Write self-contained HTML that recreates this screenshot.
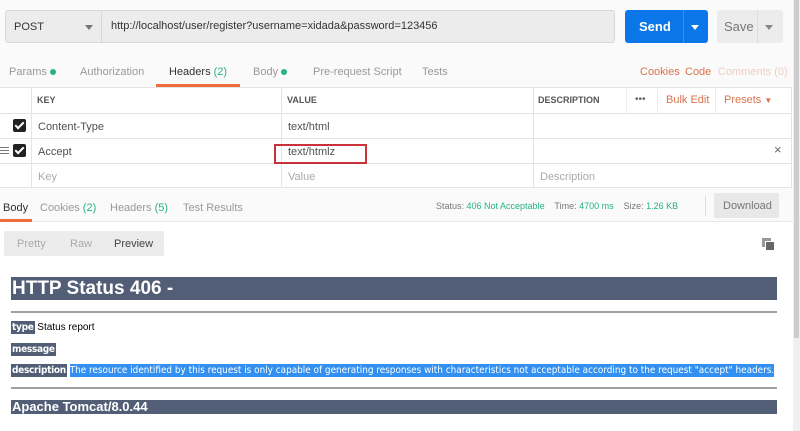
<!DOCTYPE html>
<html><head><style>
*{margin:0;padding:0;box-sizing:border-box}
body{width:800px;height:431px;overflow:hidden;background:#fff;font-family:"Liberation Sans",sans-serif;position:relative;color:#505050}
.a{position:absolute}
.t{font-size:11px;white-space:nowrap}
.hr{position:absolute;left:11px;width:766px;height:2px;background:#a0a0a0}
.bar{position:absolute;left:11px;width:766px;background:#525d76;color:#fff;font-weight:bold;font-family:"Liberation Sans",sans-serif}
.lbl{background:#525d76;color:#fff;font-weight:bold;font-family:"DejaVu Sans Condensed","DejaVu Sans",sans-serif;font-size:10px;padding:1px 1px;letter-spacing:-0.3px}
.cb{position:absolute;width:13px;height:13px;background:#222;border-radius:2px}
.cb:after{content:"";position:absolute;left:4px;top:1px;width:3px;height:7px;border:solid #fff;border-width:0 2px 2px 0;transform:rotate(45deg)}
</style></head><body>
<div class="a" style="left:0;top:0;width:793px;height:60px;background:#fafafa"></div>
<div class="a" style="left:5px;top:10px;width:610px;height:33px;background:#ececec;border:1px solid #d8d8d8;border-radius:3px"></div>
<div class="a" style="left:101px;top:10px;width:1px;height:33px;background:#d8d8d8"></div>
<div class="a t" style="left:14px;top:21px;color:#333">POST</div>
<div class="a" style="left:85px;top:25px;border:4px solid transparent;border-top:5px solid #777"></div>
<div class="a t" style="left:111px;top:20px;color:#333">http://localhost/user/register?username=xidada&amp;password=123456</div>
<div class="a" style="left:625px;top:10px;width:83px;height:33px;background:#0b76e8;border-radius:3px"></div>
<div class="a" style="left:683px;top:10px;width:1px;height:33px;background:#3a8ef0"></div>
<div class="a" style="left:639px;top:19px;color:#fff;font-weight:bold;font-size:13px">Send</div>
<div class="a" style="left:691px;top:25px;border:4px solid transparent;border-top:5px solid #fff"></div>
<div class="a" style="left:717px;top:10px;width:66px;height:33px;background:#ececec;border-radius:3px"></div>
<div class="a" style="left:757px;top:10px;width:1px;height:33px;background:#ddd"></div>
<div class="a" style="left:724px;top:19px;color:#777;font-size:13px">Save</div>
<div class="a" style="left:765px;top:25px;border:4px solid transparent;border-top:5px solid #888"></div>

<div class="a" style="left:0;top:60px;width:793px;height:27px;background:#fafafa"></div>
<div class="a t" style="left:9px;top:66px;color:#999">Params <span style="display:inline-block;width:6px;height:6px;border-radius:3px;background:#26b47f"></span></div>
<div class="a t" style="left:80px;top:66px;color:#999">Authorization</div>
<div class="a t" style="left:169px;top:66px;color:#333">Headers <span style="color:#26b47f">(2)</span></div>
<div class="a" style="left:156px;top:84px;width:84px;height:3px;background:#f26b3a"></div>
<div class="a t" style="left:253px;top:66px;color:#999">Body <span style="display:inline-block;width:6px;height:6px;border-radius:3px;background:#26b47f"></span></div>
<div class="a t" style="left:313px;top:66px;color:#999">Pre-request Script</div>
<div class="a t" style="left:422px;top:66px;color:#999">Tests</div>
<div class="a t" style="left:640px;top:66px;color:#d7734d">Cookies</div>
<div class="a t" style="left:685px;top:66px;color:#d7734d">Code</div>
<div class="a t" style="left:718px;top:66px;color:#f0cfc2">Comments (0)</div>

<div class="a" style="left:0;top:87px;width:792px;height:101px;border:1px solid #e4e4e4;border-left:none"></div>
<div class="a" style="left:0;top:113px;width:792px;height:1px;background:#e4e4e4"></div>
<div class="a" style="left:0;top:138px;width:792px;height:1px;background:#e4e4e4"></div>
<div class="a" style="left:0;top:163px;width:792px;height:1px;background:#e4e4e4"></div>
<div class="a" style="left:31px;top:87px;width:1px;height:101px;background:#e4e4e4"></div>
<div class="a" style="left:281px;top:87px;width:1px;height:101px;background:#e4e4e4"></div>
<div class="a" style="left:533px;top:87px;width:1px;height:101px;background:#e4e4e4"></div>
<div class="a" style="left:626px;top:88px;width:1px;height:25px;background:#eee"></div>
<div class="a" style="left:657px;top:88px;width:1px;height:25px;background:#eee"></div>
<div class="a" style="left:715px;top:88px;width:1px;height:25px;background:#eee"></div>
<div class="a" style="left:37px;top:95px;font-size:9px;font-weight:bold;color:#555">KEY</div>
<div class="a" style="left:287px;top:95px;font-size:9px;font-weight:bold;color:#555">VALUE</div>
<div class="a" style="left:538px;top:95px;font-size:9px;font-weight:bold;color:#555">DESCRIPTION</div>
<div class="a" style="left:635px;top:94px;font-size:10px;color:#666">•••</div>
<div class="a t" style="left:666px;top:94px;color:#d7734d">Bulk Edit</div>
<div class="a t" style="left:724px;top:94px;color:#d7734d">Presets <span style="font-size:8px">▼</span></div>
<div class="cb" style="left:13px;top:119px"></div>
<div class="cb" style="left:13px;top:144px"></div>
<div class="a" style="left:0;top:147px;width:9px;height:7px;border-top:1px solid #777;border-bottom:1px solid #777"></div>
<div class="a" style="left:0;top:150px;width:9px;height:1px;background:#777"></div>
<div class="a t" style="left:38px;top:121px">Content-Type</div>
<div class="a t" style="left:38px;top:146px">Accept</div>
<div class="a t" style="left:38px;top:171px;color:#aaa">Key</div>
<div class="a t" style="left:288px;top:121px">text/html</div>
<div class="a t" style="left:288px;top:146px">text/htmlz</div>
<div class="a t" style="left:288px;top:171px;color:#aaa">Value</div>
<div class="a t" style="left:540px;top:171px;color:#aaa">Description</div>
<div class="a" style="left:774px;top:142px;font-size:13px;color:#666">×</div>
<div class="a" style="left:274px;top:144px;width:93px;height:20px;border:2px solid #c8333a"></div>

<div class="a" style="left:0;top:188px;width:793px;height:34px;background:#fafafa;border-bottom:1px solid #e8e8e8"></div>
<div class="a t" style="left:3px;top:202px;color:#333">Body</div>
<div class="a" style="left:0;top:219px;width:32px;height:3px;background:#f26b3a"></div>
<div class="a t" style="left:40px;top:202px;color:#999">Cookies <span style="color:#26b47f">(2)</span></div>
<div class="a t" style="left:110px;top:202px;color:#999">Headers <span style="color:#26b47f">(5)</span></div>
<div class="a t" style="left:183px;top:202px;color:#999">Test Results</div>
<div class="a" style="left:436px;top:201px;font-size:9px;color:#777;white-space:nowrap">Status: <span style="color:#26b47f">406 Not Acceptable</span>&nbsp;&nbsp;&nbsp; Time: <span style="color:#26b47f">4700 ms</span>&nbsp;&nbsp;&nbsp; Size: <span style="color:#26b47f">1.26 KB</span></div>
<div class="a" style="left:705px;top:196px;width:1px;height:20px;background:#ddd"></div>
<div class="a" style="left:714px;top:193px;width:65px;height:25px;background:#e8e8e8;border-radius:2px"></div>
<div class="a t" style="left:723px;top:200px;color:#777">Download</div>

<div class="a" style="left:4px;top:231px;width:160px;height:25px;background:#ececec;border-radius:2px"></div>
<div class="a t" style="left:17px;top:238px;color:#aaa">Pretty</div>
<div class="a t" style="left:70px;top:238px;color:#aaa">Raw</div>
<div class="a t" style="left:114px;top:238px;color:#444">Preview</div>
<div class="a" style="left:762px;top:238px;width:9px;height:9px;background:#999"></div>
<div class="a" style="left:765px;top:241px;width:10px;height:10px;background:#666;border:1px solid #fff"></div>

<div class="bar" style="top:277px;height:23px;font-size:19px;line-height:23px;padding-left:1px">HTTP Status 406 -</div>
<div class="hr" style="top:311px"></div>
<div class="a" style="left:11px;top:322px;font-size:10px;color:#000;white-space:nowrap"><span class="lbl">type</span> Status report</div>
<div class="a" style="left:11px;top:344px;font-size:10px"><span class="lbl">message</span></div>
<div class="a" style="left:11px;top:365px;font-size:10px;white-space:nowrap"><span class="lbl">description</span> <span style="background:#3390f0;color:#fff;font-family:'DejaVu Sans Condensed','DejaVu Sans',sans-serif;font-size:9.9px;padding:1px 0">The resource identified by this request is only capable of generating responses with characteristics not acceptable according to the request "accept" headers.</span></div>
<div class="hr" style="top:387px"></div>
<div class="bar" style="top:400px;height:14px;font-size:13px;line-height:14px;padding-left:1px">Apache Tomcat/8.0.44</div>

<div class="a" style="left:793px;top:0;width:7px;height:431px;background:#f0f0f0"></div>
<div class="a" style="left:794px;top:0;width:5px;height:338px;background:#cdcdcd"></div>
</body></html>
